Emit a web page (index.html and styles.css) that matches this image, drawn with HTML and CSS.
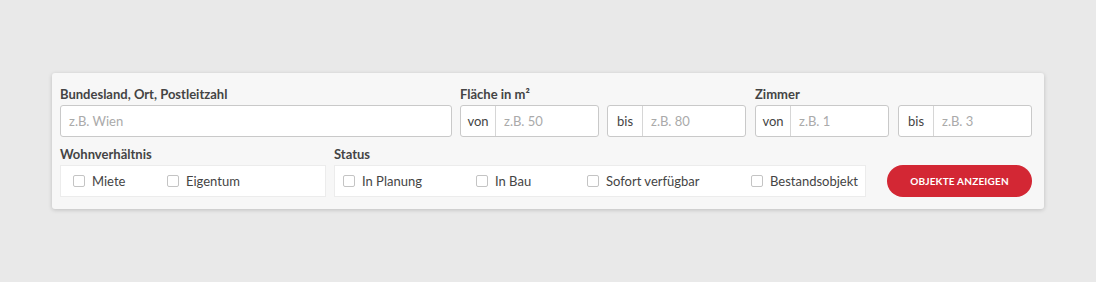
FILE: index.html
```html
<!DOCTYPE html>
<html lang="de">
<head>
<meta charset="utf-8">
<link rel="stylesheet" href="styles.css">
</head>
<body>
<form class="card">
  <div class="row">
    <div class="field f-loc">
      <div class="label">Bundesland, Ort, Postleitzahl</div>
      <div class="input"><span class="ph">z.B. Wien</span></div>
    </div>
    <div class="field f-area">
      <div class="label">Fläche in m²</div>
      <div class="pair">
        <div class="input group"><span class="addon">von</span><span class="ph">z.B. 50</span></div>
        <div class="input group"><span class="addon">bis</span><span class="ph">z.B. 80</span></div>
      </div>
    </div>
    <div class="field f-rooms">
      <div class="label">Zimmer</div>
      <div class="pair">
        <div class="input group"><span class="addon">von</span><span class="ph">z.B. 1</span></div>
        <div class="input group"><span class="addon">bis</span><span class="ph">z.B. 3</span></div>
      </div>
    </div>
  </div>
  <div class="row row2">
    <div class="field f-wohn">
      <div class="label">Wohnverhältnis</div>
      <div class="box box-wohn">
        <label class="check c-miete"><span class="cb"></span>Miete</label>
        <label class="check"><span class="cb"></span>Eigentum</label>
      </div>
    </div>
    <div class="field f-status">
      <div class="label">Status</div>
      <div class="box box-status">
        <label class="check c-plan"><span class="cb"></span>In Planung</label>
        <label class="check c-bau"><span class="cb"></span>In Bau</label>
        <label class="check c-sofort"><span class="cb"></span>Sofort verfügbar</label>
        <label class="check"><span class="cb"></span>Bestandsobjekt</label>
      </div>
    </div>
    <button type="button" class="btn">OBJEKTE ANZEIGEN</button>
  </div>
</form>
</body>
</html>
```
FILE: styles.css
```css
html, body { margin: 0; padding: 0; }
body {
  background: #e9e9e9;
  padding: 73px 52px;
  font-family: Lato, "Open Sans", "Liberation Sans", sans-serif;
  font-size: 13px;
  color: #444;
}
.card {
  width: 992px;
  box-sizing: border-box;
  background: #f7f7f7;
  border-radius: 3px;
  box-shadow: 0 1px 4px rgba(0,0,0,0.18);
  padding: 12px 12px 12px 8px;
}
.row { display: flex; }
.row2 { margin-top: 8px; align-items: flex-end; }
.label {
  font-weight: 700;
  line-height: 18px;
  height: 18px;
  margin-bottom: 2px;
  color: #444;
}
.f-loc { width: 392px; margin-right: 8px; }
.f-area { width: 286px; margin-right: 9px; }
.f-rooms { width: 277px; }
.pair { display: flex; justify-content: space-between; }
.f-area .group { width: 139px; }
.f-rooms .group { width: 134px; }
.input {
  box-sizing: border-box;
  height: 32px;
  background: #fff;
  border: 1px solid #c9c9c9;
  border-radius: 3px;
  display: flex;
  align-items: center;
  padding-left: 8px;
}
.input.group { padding-left: 0; }
.addon {
  width: 35px;
  box-sizing: border-box;
  height: 100%;
  display: flex;
  align-items: center;
  justify-content: center;
  border-right: 1px solid #d6d6d6;
  color: #444;
  margin-right: 8px;
}
.ph { color: #aaa; }
.box {
  box-sizing: border-box;
  height: 32px;
  background: #fff;
  border: 1px solid #ececec;
  display: flex;
  align-items: center;
}
.f-wohn { width: 266px; margin-right: 8px; }
.f-status { width: 532px; margin-right: 21px; }
.box-wohn { padding-left: 12px; }
.box-status { padding-left: 8px; }
.c-miete { width: 94px; }
.c-plan { width: 133px; }
.c-bau { width: 111px; }
.c-sofort { width: 164px; }
.check { display: flex; align-items: center; color: #444; }
.cb {
  width: 10px; height: 10px;
  border: 1px solid #c4c4c4;
  border-radius: 2px;
  background: #fff;
  margin-right: 7px;
  flex: none;
}
.btn {
  width: 145px;
  height: 32px;
  border: 0;
  border-radius: 16px;
  background: #d32734;
  color: #fff;
  font-family: inherit;
  font-weight: 700;
  font-size: 10px;
  letter-spacing: 0.2px;
  padding: 0;
  cursor: pointer;
}
```
